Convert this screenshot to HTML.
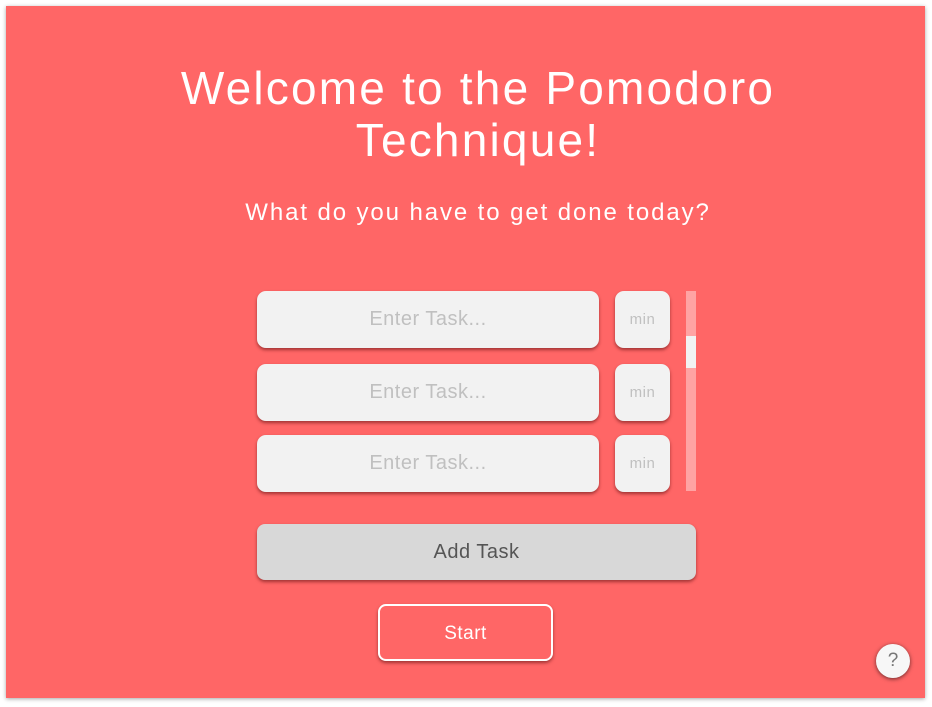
<!DOCTYPE html>
<html><head><style>
body{margin:0;background:#fff;width:932px;height:707px;position:relative;overflow:hidden;font-family:"Liberation Sans",sans-serif}
.panel{position:absolute;left:6px;top:6px;width:919px;height:692px;background:#ff6666;box-shadow:0 1px 4px rgba(0,0,0,.35)}
.t{position:absolute;left:12px;width:932px;text-align:center;color:#fff}
.in{position:absolute;background:#f2f2f2;border-radius:9px;box-shadow:0 2px 3px rgba(100,20,20,.6);color:#c0c0c0;text-align:center;font-size:20px;line-height:57px;height:57px;letter-spacing:.5px}
.m{font-size:15px}
</style></head><body>
<div class="panel"></div>
<div class="t" style="top:62px;font-size:46px;line-height:52px;letter-spacing:2.2px">Welcome to the Pomodoro<br>Technique!</div>
<div class="t" style="top:198px;font-size:24px;line-height:30px;letter-spacing:1.9px">What do you have to get done today?</div>
<div class="in" style="left:257px;top:291px;width:342px">Enter Task...</div>
<div class="in m" style="left:615px;top:291px;width:55px">min</div>
<div class="in" style="left:257px;top:364px;width:342px">Enter Task...</div>
<div class="in m" style="left:615px;top:364px;width:55px">min</div>
<div class="in" style="left:257px;top:435px;width:342px">Enter Task...</div>
<div class="in m" style="left:615px;top:435px;width:55px">min</div>
<div style="position:absolute;left:686px;top:291px;width:10px;height:200px;background:#ffa3a3"></div>
<div style="position:absolute;left:686px;top:336px;width:10px;height:32px;background:#f2f2f2"></div>
<div style="position:absolute;left:257px;top:524px;width:439px;height:56px;background:#d8d8d8;border-radius:8px;box-shadow:0 2px 3px rgba(100,20,20,.6);text-align:center;line-height:57px;font-size:20px;color:#555;letter-spacing:.5px">Add Task</div>
<div style="position:absolute;left:378px;top:604px;width:171px;height:53px;border:2px solid #fff;border-radius:8px;box-shadow:0 2px 3px rgba(100,20,20,.6);text-align:center;line-height:55px;font-size:19px;color:#fff;letter-spacing:.5px">Start</div>
<div style="position:absolute;left:876px;top:644px;width:34px;height:34px;border-radius:50%;background:#f7f7f7;box-shadow:0 1px 4px rgba(0,0,0,.6);text-align:center;line-height:34px;font-size:19px;color:#777">?</div>
</body></html>
